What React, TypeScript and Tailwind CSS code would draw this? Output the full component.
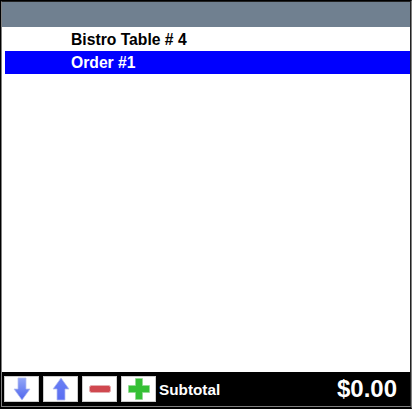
import { useState } from 'react';

function ArrowIcon({ up }: { up?: boolean }) {
  const id = up ? 'arrowUp' : 'arrowDown';
  return (
    <svg width="18" height="24" viewBox="0 0 18 24">
      <defs>
        <linearGradient id={id} x1="0" y1="0" x2="0" y2="1">
          <stop offset="0" stopColor={up ? '#6a80f4' : '#93a6f6'} />
          <stop offset="1" stopColor={up ? '#5a6ef2' : '#4f66ee'} />
        </linearGradient>
      </defs>
      {up ? (
        <path d="M9 1 17 12h-4v11H5V12H1z" fill={`url(#${id})`} stroke="#b4bdf0" strokeWidth="0.75" />
      ) : (
        <path d="M5 1h8v11h4L9 23 1 12h4z" fill={`url(#${id})`} stroke="#b4bdf0" strokeWidth="0.75" />
      )}
    </svg>
  );
}

function MinusIcon() {
  return (
    <svg width="22" height="8" viewBox="0 0 22 8">
      <rect x="0.5" y="0.5" width="21" height="7" rx="2" fill="#d0484f" stroke="#e5adb0" />
    </svg>
  );
}

function PlusIcon() {
  return (
    <svg width="22" height="22" viewBox="0 0 22 22">
      <path d="M7.5 0.5h7v7h7v7h-7v7h-7v-7h-7v-7h7z" fill="#35c035" stroke="#93d993" strokeWidth="0.75" />
    </svg>
  );
}

const toolButtons = [
  { name: 'down', icon: <ArrowIcon /> },
  { name: 'up', icon: <ArrowIcon up /> },
  { name: 'remove', icon: <MinusIcon /> },
  { name: 'add', icon: <PlusIcon /> },
];

export default function App() {
  const [total] = useState('$0.00');

  return (
    <div className="w-[412px] h-[409px] border-l border-t border-r border-b-2 border-l-black border-t-black border-r-[#808080] border-b-black font-['Liberation_Sans',Arial,sans-serif]">
      <div className="h-full flex flex-col bg-white border border-l-[#808080] border-b-[#808080] border-t-[#222222] border-r-[#222222]">
        <div className="h-[25px] bg-[#708090]"></div>

        <div className="flex-1 pl-[3px]">
          <div className="h-[24px] pl-[66px] pt-px flex items-center text-[15.7px] font-bold text-black">Bistro Table # 4</div>
          <div className="h-[23px] pl-[66px] flex items-center text-[15.7px] font-bold text-white bg-[#0000ff]">Order #1</div>
        </div>

        <div className="h-[34px] bg-black flex items-center pl-[2px] pr-[13px]">
          <div className="flex gap-[4px]">
            {toolButtons.map((btn) => (
              <button key={btn.name} className="w-[35px] h-[26px] bg-white border border-[#cccccc] flex items-center justify-center overflow-hidden">
                {btn.icon}
              </button>
            ))}
          </div>
          <span className="ml-[3px] pt-[2px] text-[15.3px] font-bold text-white">Subtotal</span>
          <span className="ml-auto text-[24px] font-bold text-white">{total}</span>
        </div>
      </div>
    </div>
  );
}
